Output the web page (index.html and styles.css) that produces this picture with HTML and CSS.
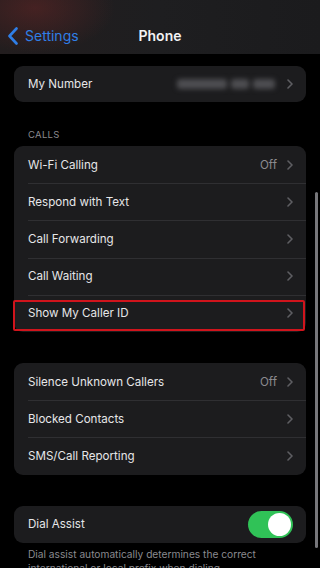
FILE: index.html
```html
<!DOCTYPE html>
<html>
<head>
<meta charset="utf-8">
<link rel="stylesheet" href="styles.css">
</head>
<body>
<div class="screen">
  <header class="nav">
    <div class="back">
      <svg class="back-icon" width="12" height="18" viewBox="0 0 12 18"><path d="M9.5 1.5 L2.5 9 L9.5 16.5" fill="none" stroke="#2f7ee6" stroke-width="2.6" stroke-linecap="round" stroke-linejoin="round"/></svg>
      <span>Settings</span>
    </div>
    <div class="title">Phone</div>
  </header>

  <main class="content">
    <section class="card first">
      <div class="row">
        <span class="label">My Number</span>
        <span class="value"><span class="blur"><span class="seg s1"></span><span class="seg s2"></span><span class="seg s3"></span></span></span>
        <svg class="chev" width="6" height="10" viewBox="0 0 6 10"><path d="M1 1 L5 5 L1 9" fill="none" stroke="#5e5e62" stroke-width="1.6" stroke-linecap="round" stroke-linejoin="round"/></svg>
      </div>
    </section>

    <div class="group-header">CALLS</div>
    <section class="card">
      <div class="row"><span class="label">Wi-Fi Calling</span><span class="value">Off</span><svg class="chev" width="6" height="10" viewBox="0 0 6 10"><path d="M1 1 L5 5 L1 9" fill="none" stroke="#5e5e62" stroke-width="1.6" stroke-linecap="round" stroke-linejoin="round"/></svg></div>
      <div class="row"><span class="label">Respond with Text</span><span class="value"></span><svg class="chev" width="6" height="10" viewBox="0 0 6 10"><path d="M1 1 L5 5 L1 9" fill="none" stroke="#5e5e62" stroke-width="1.6" stroke-linecap="round" stroke-linejoin="round"/></svg></div>
      <div class="row"><span class="label">Call Forwarding</span><span class="value"></span><svg class="chev" width="6" height="10" viewBox="0 0 6 10"><path d="M1 1 L5 5 L1 9" fill="none" stroke="#5e5e62" stroke-width="1.6" stroke-linecap="round" stroke-linejoin="round"/></svg></div>
      <div class="row"><span class="label">Call Waiting</span><span class="value"></span><svg class="chev" width="6" height="10" viewBox="0 0 6 10"><path d="M1 1 L5 5 L1 9" fill="none" stroke="#5e5e62" stroke-width="1.6" stroke-linecap="round" stroke-linejoin="round"/></svg></div>
      <div class="row highlight"><span class="label">Show My Caller ID</span><span class="value"></span><svg class="chev" width="6" height="10" viewBox="0 0 6 10"><path d="M1 1 L5 5 L1 9" fill="none" stroke="#5e5e62" stroke-width="1.6" stroke-linecap="round" stroke-linejoin="round"/></svg></div>
    </section>

    <section class="card spaced">
      <div class="row"><span class="label">Silence Unknown Callers</span><span class="value">Off</span><svg class="chev" width="6" height="10" viewBox="0 0 6 10"><path d="M1 1 L5 5 L1 9" fill="none" stroke="#5e5e62" stroke-width="1.6" stroke-linecap="round" stroke-linejoin="round"/></svg></div>
      <div class="row"><span class="label">Blocked Contacts</span><span class="value"></span><svg class="chev" width="6" height="10" viewBox="0 0 6 10"><path d="M1 1 L5 5 L1 9" fill="none" stroke="#5e5e62" stroke-width="1.6" stroke-linecap="round" stroke-linejoin="round"/></svg></div>
      <div class="row"><span class="label">SMS/Call Reporting</span><span class="value"></span><svg class="chev" width="6" height="10" viewBox="0 0 6 10"><path d="M1 1 L5 5 L1 9" fill="none" stroke="#5e5e62" stroke-width="1.6" stroke-linecap="round" stroke-linejoin="round"/></svg></div>
    </section>

    <section class="card spaced">
      <div class="row"><span class="label">Dial Assist</span><span class="value"></span><span class="toggle"><span class="knob"></span></span></div>
    </section>
    <p class="footer">Dial assist automatically determines the correct international or local prefix when dialing.</p>
  </main>
  <div class="scrollbar"></div>
</div>
</body>
</html>
```
FILE: styles.css
```css
html, body {
  margin: 0;
  padding: 0;
  background: #000;
}
body {
  font-family: Inter, "Noto Sans", sans-serif;
  color: #e8e8ea;
  -webkit-font-smoothing: antialiased;
}
.screen {
  position: relative;
  width: 320px;
  height: 568px;
  overflow: hidden;
  background: #000;
}
.nav {
  position: relative;
  height: 54px;
  background:
    radial-gradient(ellipse 80px 45px at 35px 8px, rgba(105, 38, 38, 0.5), rgba(105, 38, 38, 0) 100%),
    linear-gradient(90deg, #221d1e 0%, #1e1e20 50%, #1b1b1d 100%);
  display: flex;
  align-items: flex-end;
  justify-content: center;
  padding-bottom: 9px;
  box-sizing: border-box;
}
.back {
  position: absolute;
  left: 7px;
  bottom: 9px;
  display: flex;
  align-items: center;
  gap: 6px;
  color: #2f7ee6;
  font-size: 14px;
  line-height: 18px;
}
.back-icon {
  display: block;
}
.title {
  font-size: 14px;
  font-weight: 600;
  line-height: 18px;
  color: #f2f2f4;
}
.content {
  padding: 0 14px;
}
.card {
  background: #1c1c1e;
  border-radius: 9px;
}
.card.first {
  margin-top: 12px;
}
.card.spaced {
  margin-top: 31px;
}
.row {
  position: relative;
  height: 37.2px;
  display: flex;
  align-items: center;
  padding: 0 14px;
  box-sizing: border-box;
}
.card.first .row {
  height: 36px;
}
.row + .row::before {
  content: "";
  position: absolute;
  top: 0;
  left: 14px;
  right: 0;
  height: 1px;
  background: #2f2f32;
}
.label {
  font-size: 11.6px;
  color: #e6e6e8;
  flex: 1;
  white-space: nowrap;
}
.value {
  font-size: 11.6px;
  color: #8a8a8f;
  margin-right: 10px;
}
.chev {
  display: block;
  margin-right: -1px;
}
.blur {
  display: flex;
  gap: 4px;
  width: 98px;
  height: 10px;
  margin-right: 2px;
  filter: blur(2.5px);
}
.seg {
  display: block;
  height: 10px;
  background: #4d4d51;
  border-radius: 3px;
}
.s1 { width: 50px; }
.s2 { width: 18px; }
.s3 { width: 22px; }
.group-header {
  font-size: 9.5px;
  color: #8a8a8f;
  letter-spacing: 0.3px;
  padding: 27px 14px 5px;
  line-height: 12px;
}
.highlight::after {
  content: "";
  position: absolute;
  left: -1px;
  right: 1px;
  top: 5px;
  bottom: 1px;
  border: 2px solid #d0141c;
  border-radius: 2px;
}
.toggle {
  width: 45px;
  height: 27px;
  border-radius: 14px;
  background: #30c257;
  position: relative;
  margin-right: -1px;
}
.knob {
  position: absolute;
  right: 2px;
  top: 2px;
  width: 23px;
  height: 23px;
  border-radius: 50%;
  background: #fff;
}
.footer {
  margin: 4px 0 0;
  padding: 0 14px;
  font-size: 10.2px;
  line-height: 14px;
  color: #8a8a8f;
}
.scrollbar {
  position: absolute;
  left: 315px;
  top: 192px;
  width: 2.5px;
  height: 356px;
  border-radius: 2px;
  background: #77777b;
}
```
